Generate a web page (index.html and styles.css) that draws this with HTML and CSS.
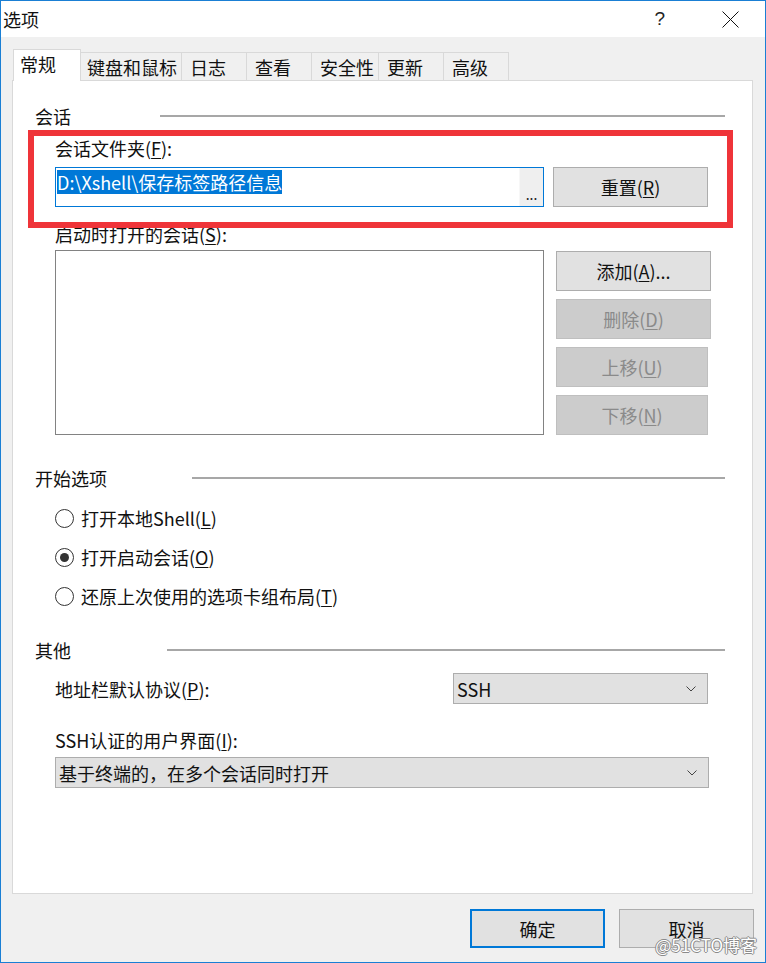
FILE: index.html
```html
<!DOCTYPE html>
<html lang="zh-CN">
<head>
<meta charset="utf-8">
<title>选项</title>
<link rel="stylesheet" href="styles.css">
</head>
<body>
<div class="window">
  <div class="titlebar">
    <span class="title">选项</span>
    <span class="help">?</span>
    <span class="close">
      <svg width="17" height="17" viewBox="0 0 17 17"><path d="M0.5 0.5 L16.5 16.5 M16.5 0.5 L0.5 16.5" stroke="#111" stroke-width="1" fill="none"/></svg>
    </span>
  </div>
  <div class="client">
    <div class="tabs">
      <div class="tab active">常规</div>
      <div class="tab">键盘和鼠标</div>
      <div class="tab">日志</div>
      <div class="tab">查看</div>
      <div class="tab">安全性</div>
      <div class="tab">更新</div>
      <div class="tab">高级</div>
    </div>
    <div class="panel">
      <div class="group-head gh-session"><span class="gh-label">会话</span><span class="rule"></span></div>
      <div class="indent">
        <div class="field-label first">会话文件夹(<u>F</u>):</div>
        <div class="path-row">
          <div class="path-input">
            <span class="path-text"><span class="sel">D:\Xshell\保存标签路径信息</span></span>
            <span class="browse">...</span>
          </div>
          <div class="btn btn-reset">重置(<u>R</u>)</div>
        </div>
        <div class="field-label gap15">启动时打开的会话(<u>S</u>):</div>
        <div class="list-row">
          <div class="listbox"></div>
          <div class="list-buttons">
            <div class="btn btn-side">添加(<u>A</u>)...</div>
            <div class="btn btn-side disabled">删除(<u>D</u>)</div>
            <div class="btn btn-side narrow disabled">上移(<u>U</u>)</div>
            <div class="btn btn-side narrow disabled">下移(<u>N</u>)</div>
          </div>
        </div>
      </div>

      <div class="group-head gh-start"><span class="gh-label">开始选项</span><span class="rule"></span></div>
      <div class="indent">
        <div class="radio first-radio"><span class="circle"></span><span>打开本地Shell(<u>L</u>)</span></div>
        <div class="radio"><span class="circle checked"></span><span>打开启动会话(<u>O</u>)</span></div>
        <div class="radio"><span class="circle"></span><span>还原上次使用的选项卡组布局(<u>T</u>)</span></div>
      </div>

      <div class="group-head gh-other"><span class="gh-label">其他</span><span class="rule"></span></div>
      <div class="indent">
        <div class="proto-row">
          <span>地址栏默认协议(<u>P</u>):</span>
          <div class="select select-short"><span>SSH</span><svg class="chev" width="10" height="6" viewBox="0 0 10 6"><path d="M0.5 0.5 L5 5 L9.5 0.5" stroke="#444" stroke-width="1" fill="none"/></svg></div>
        </div>
        <div class="field-label gap24">SSH认证的用户界面(<u>I</u>):</div>
        <div class="select select-wide"><span>基于终端的，在多个会话同时打开</span><svg class="chev" width="10" height="6" viewBox="0 0 10 6"><path d="M0.5 0.5 L5 5 L9.5 0.5" stroke="#444" stroke-width="1" fill="none"/></svg></div>
      </div>

      <div class="highlight-box"></div>
    </div>
    <div class="footer">
      <div class="btn btn-foot default">确定</div>
      <div class="btn btn-foot">取消</div>
    </div>
  </div>
  <div class="watermark">@51CTO博客</div>
</div>
</body>
</html>
```
FILE: styles.css
```css
* { box-sizing: border-box; }
html, body { margin: 0; padding: 0; }
body {
  width: 766px;
  height: 963px;
  font-family: "Noto Sans CJK SC", "Noto Sans", sans-serif;
  font-size: 18px;
  color: #111;
  background: #f0f0f0;
}
u { text-decoration: underline; text-underline-offset: 2px; text-decoration-thickness: 1px; }

.window {
  position: relative;
  width: 766px;
  height: 963px;
  border: 1px solid #1a7fd4;
  background: #f0f0f0;
  display: flex;
  flex-direction: column;
}

.titlebar {
  height: 36px;
  background: #fff;
  display: flex;
  align-items: center;
  flex-shrink: 0;
}
.title { margin-left: 2px; line-height: 24px; }
.help {
  margin-left: auto;
  font-family: "Liberation Sans", sans-serif;
  font-size: 19px;
  font-weight: 300;
  color: #222;
  margin-right: 57px;
}
.close { display: flex; margin-right: 26px; }

.client { flex: 1; display: flex; flex-direction: column; }

.tabs {
  display: flex;
  align-items: flex-end;
  margin-top: 12px;
  margin-left: 14px;
  height: 31px;
}
.tab {
  position: relative;
  height: 28px;
  min-width: 66px;
  padding: 0 4px 0 8px;
  border: 1px solid #d9d9d9;
  border-bottom: none;
  margin-right: -1px;
  background: #f0f0f0;
  display: flex;
  align-items: center;
  line-height: 24px;
  white-space: nowrap;
}
.tab.active {
  z-index: 2;
  height: 32px;
  min-width: 68px;
  margin: 0 -3px -1px -2px;
  padding: 0 4px 4px 6px;
  background: #fff;
}

.panel {
  position: relative;
  margin: 0 12px 0 11px;
  height: 814px;
  border: 1px solid #d9d9d9;
  background: #fff;
  padding: 23px 0 0 22px;
}

.group-head {
  display: flex;
  align-items: center;
  height: 24px;
  line-height: 24px;
  padding-right: 27px;
}
.gh-session .gh-label { width: 125px; }
.gh-start { margin-top: 31px; }
.gh-start .gh-label { width: 157px; }
.gh-other { margin-top: 30px; }
.gh-other .gh-label { width: 132px; }
.rule { flex: 1; height: 2px; background: #a7a7a7; }

.indent { margin-left: 20px; width: 656px; }

.field-label { height: 24px; line-height: 24px; }
.field-label.first { margin-top: 8px; }
.field-label.gap15 { margin-top: 15px; }
.field-label.gap24 { margin-top: 24px; }

.path-row { display: flex; margin-top: 7px; gap: 9px; height: 40px; }
.path-input {
  flex-shrink: 0;
  width: 489px;
  height: 40px;
  border: 1px solid #0078d7;
  background: #fff;
  display: flex;
}
.path-text { flex: 1; padding: 2px 0 0 1px; line-height: 24px; }
.sel { background: #0078d7; color: #fff; display: inline-block; height: 24px; }
.browse {
  width: 24px;
  background: #efefef;
  border-left: 1px solid #f7f7f7;
  display: flex;
  align-items: flex-end;
  justify-content: center;
  font-size: 14px;
  line-height: 16px;
  padding-bottom: 4px;
  color: #222;
}

.btn {
  flex-shrink: 0;
  display: flex;
  align-items: center;
  justify-content: center;
  background: #e1e1e1;
  border: 1px solid #adadad;
  line-height: 24px;
  white-space: nowrap;
}
.btn-reset { width: 155px; height: 40px; }

.list-row { display: flex; margin-top: 4px; }
.listbox { flex-shrink: 0; width: 489px; height: 185px; border: 1px solid #828282; background: #fff; }
.list-buttons { display: flex; flex-direction: column; gap: 8px; margin-left: 12px; margin-top: 1px; }
.btn-side { width: 155px; height: 40px; }
.btn-side.narrow { width: 152px; }
.btn.disabled { background: #cccccc; border-color: #bfbfbf; color: #8a8a8a; }

.radio { display: flex; align-items: center; height: 24px; line-height: 24px; margin-top: 15px; }
.radio.first-radio { margin-top: 16px; }
.circle {
  width: 19px;
  height: 19px;
  border: 1px solid #333;
  border-radius: 50%;
  margin-right: 7px;
  display: flex;
  align-items: center;
  justify-content: center;
  background: #fff;
}
.circle.checked::after {
  content: "";
  width: 9px;
  height: 9px;
  border-radius: 50%;
  background: #333;
}

.proto-row {
  display: flex;
  align-items: center;
  justify-content: space-between;
  margin-top: 11px;
  height: 31px;
  width: 653px;
  line-height: 24px;
}
.select {
  height: 31px;
  background: #e1e1e1;
  border: 1px solid #adadad;
  display: flex;
  align-items: center;
  padding: 0 11px 0 3px;
  line-height: 24px;
}
.select span { flex: 1; }
.select-short { width: 255px; }
.select-wide { width: 654px; margin-top: 5px; }

.highlight-box {
  position: absolute;
  left: 15px;
  top: 49px;
  width: 705px;
  height: 98px;
  border: 6px solid #ef3439;
  pointer-events: none;
}

.footer {
  display: flex;
  justify-content: flex-end;
  gap: 14px;
  margin-top: 15px;
  padding-right: 11px;
}
.btn-foot { width: 135px; height: 39px; }
.btn-foot.default { border: 2px solid #0078d7; }

.watermark {
  position: absolute;
  right: 8px;
  bottom: 6px;
  font-size: 17px;
  line-height: 22px;
  color: #fff;
  text-shadow: 1px 0 0 #8a8a8a, -1px 0 0 #8a8a8a, 0 1px 0 #8a8a8a, 0 -1px 0 #8a8a8a;
}
```
